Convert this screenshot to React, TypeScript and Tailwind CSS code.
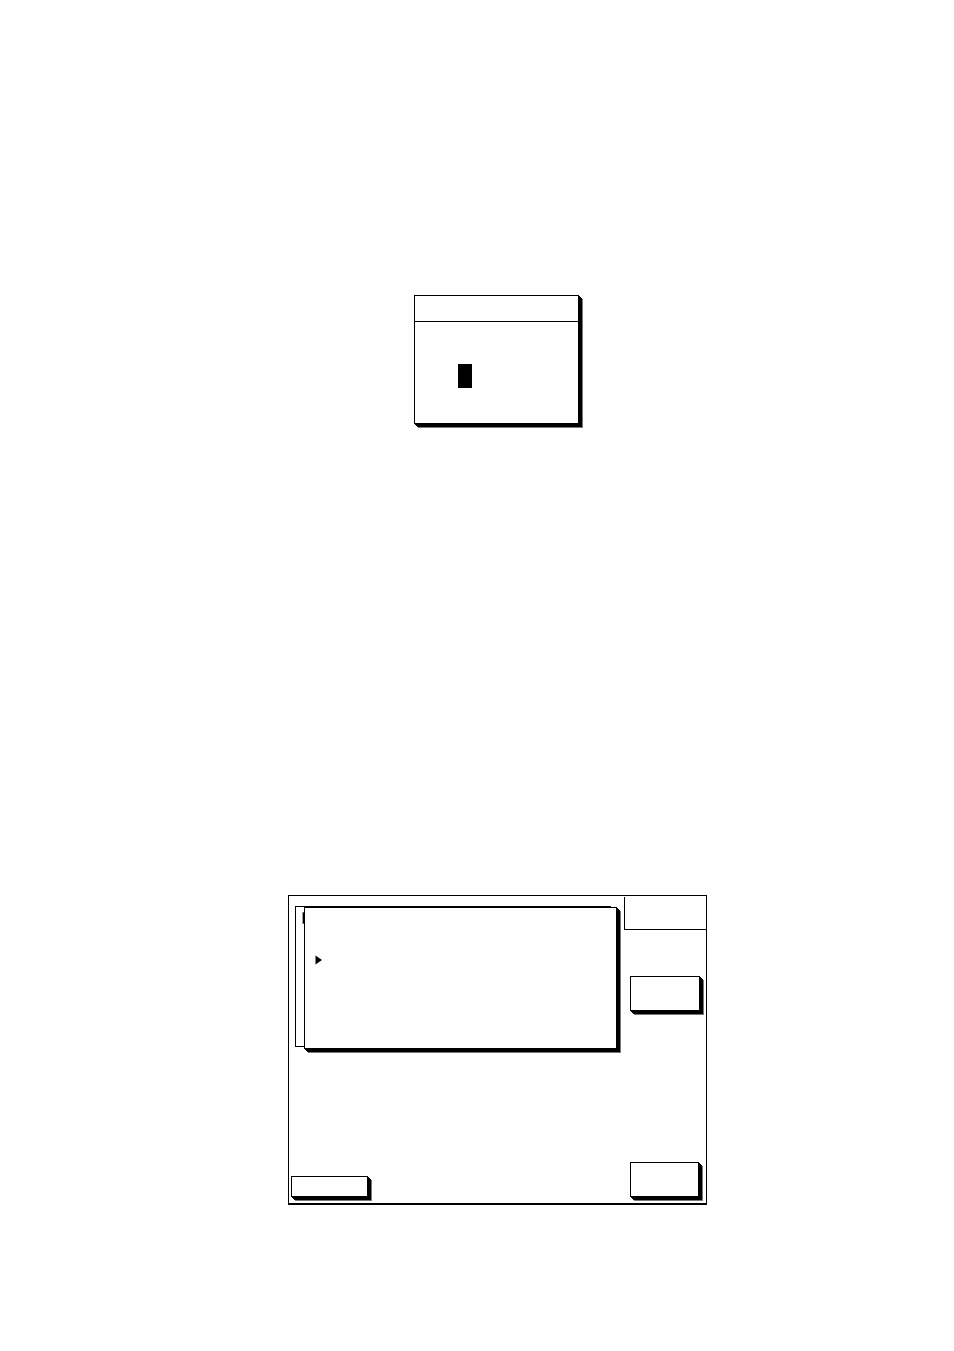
const raised =
  "border border-black bg-white shadow-[1px_1px_0_#000,2px_2px_0_#000,3px_3px_0_#000,4px_4px_0_#777]"

function Marker({ className }: { className: string }) {
  return (
    <svg viewBox="0 0 7 10" preserveAspectRatio="none" className={className} aria-hidden="true">
      <path d="M0.5 0.5 L7 5 L0.5 9.5 Z" fill="black" />
    </svg>
  )
}

function EntryDialog() {
  return (
    <section className={`w-full max-w-[165px] ${raised}`}>
      <header className="h-[26px] border-b border-black" />
      <div className="h-[101px] pt-[42px] pl-[43px]">
        <div className="h-6 w-3.5 bg-black" />
      </div>
    </section>
  )
}

function MenuWindows() {
  return (
    <div className="relative ml-1 h-[141px] w-[316px] border border-black pt-1 pl-1.5">
      <Marker className="h-3.5 w-[9px]" />
      {/* front window overlaps the one behind it */}
      <div className={`absolute top-0 left-2 h-[142px] w-[313px] pt-[47px] pl-2.5 ${raised}`}>
        <Marker className="h-2.5 w-[7px]" />
      </div>
    </div>
  )
}

function DisplayScreen() {
  return (
    <section className="flex min-h-[310px] w-full max-w-[419px] border border-b-2 border-black">
      <div className="flex flex-1 flex-col justify-between pt-2.5 pb-1.5 pl-0.5">
        <MenuWindows />
        <button type="button" aria-label="Left soft key" className={`h-[21px] w-[77px] ${raised}`} />
      </div>

      <aside className="flex w-[82px] flex-col pt-px pb-1.5">
        <div className="h-[33px] border-b border-l border-black" />
        <div className="flex flex-1 flex-col justify-between pt-[46px] pl-1.5">
          <button type="button" aria-label="Upper soft key" className={`h-[35px] w-[70px] ${raised}`} />
          <button type="button" aria-label="Lower soft key" className={`h-[35px] w-[69px] ${raised}`} />
        </div>
      </aside>
    </section>
  )
}

export default function App() {
  return (
    <main className="min-h-screen bg-white pt-[295px] pb-36 font-['Liberation_Sans',sans-serif]">
      <div className="flex justify-center pl-[39px]">
        <EntryDialog />
      </div>
      <div className="mt-[471px] flex justify-center pl-[41px]">
        <DisplayScreen />
      </div>
    </main>
  )
}
